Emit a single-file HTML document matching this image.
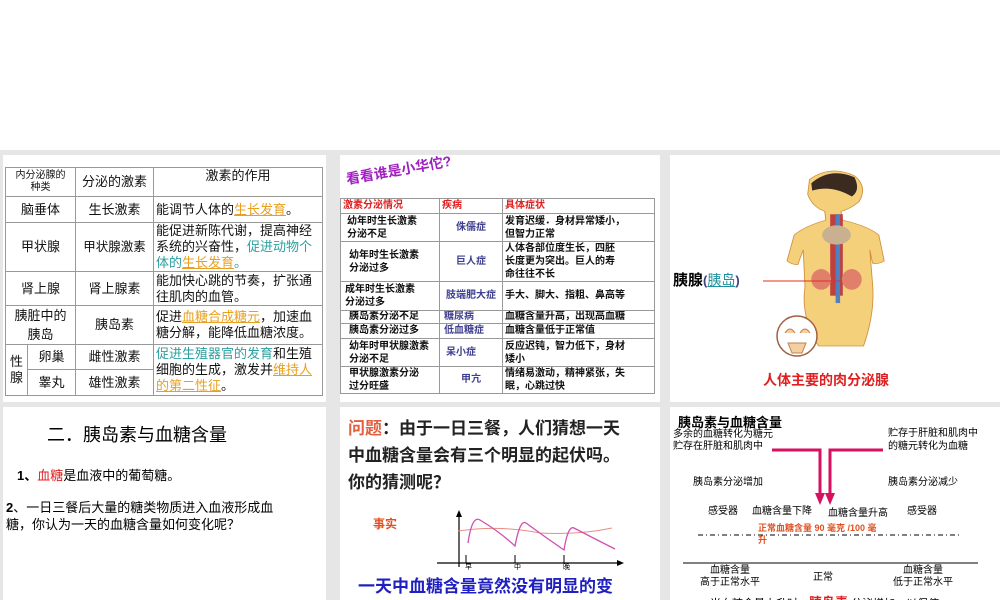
<!DOCTYPE html>
<html><head><meta charset="utf-8"><style>
*{margin:0;padding:0;box-sizing:border-box}
body{width:1000px;height:600px;overflow:hidden;background:#fff;font-family:"Liberation Sans","Noto Sans CJK SC",sans-serif;position:relative}
.bg{position:absolute;left:0;top:150px;width:1000px;height:450px;background:#e6e6e6}
.p{position:absolute;background:#fff;overflow:hidden}
.a{position:absolute;white-space:nowrap}
table{border-collapse:collapse;position:absolute;table-layout:fixed}
td{border:1px solid #999;font-size:13px;color:#111;line-height:16px;padding:0 2px;overflow:hidden}
.o{color:#e8a020;text-decoration:underline}
.t{color:#2aa0a0}
.b td{font-weight:bold}
</style></head><body>
<div class="bg"></div>

<div class="p" style="left:3px;top:155px;width:323px;height:247px">
<table style="left:2px;top:12px;width:318px;height:228px">
<colgroup><col style="width:22px"><col style="width:48px"><col style="width:78px"><col></colgroup>
<tr style="height:29px"><td colspan="2" style="text-align:center;font-size:10px;line-height:12px">内分泌腺的<br>种类</td><td style="text-align:center">分泌的激素</td><td style="text-align:center;vertical-align:top">激素的作用</td></tr>
<tr style="height:26px"><td colspan="2" style="text-align:center">脑垂体</td><td style="text-align:center">生长激素</td><td>能调节人体的<span class="o">生长发育</span>。</td></tr>
<tr style="height:49px"><td colspan="2" style="text-align:center">甲状腺</td><td style="text-align:center;font-size:12.5px">甲状腺激素</td><td>能促进新陈代谢，提高神经系统的兴奋性，<span class="t">促进动物个体的</span><span class="o">生长发育</span><span class="t">。</span></td></tr>
<tr style="height:34px"><td colspan="2" style="text-align:center">肾上腺</td><td style="text-align:center">肾上腺素</td><td>能加快心跳的节奏，扩张通往肌肉的血管。</td></tr>
<tr style="height:38px"><td colspan="2" style="text-align:center;line-height:19px">胰脏中的<br>胰岛</td><td style="text-align:center">胰岛素</td><td>促进<span class="o">血糖合成糖元</span>，加速血糖分解，能降低血糖浓度。</td></tr>
<tr style="height:25px"><td rowspan="2" style="text-align:center">性<br>腺</td><td style="text-align:center">卵巢</td><td style="text-align:center">雌性激素</td><td rowspan="2"><span class="t">促进生殖器官的发育</span>和生殖细胞的生成，激发并<span class="o">维持人的第二性征</span>。</td></tr>
<tr style="height:26px"><td style="text-align:center">睾丸</td><td style="text-align:center">雄性激素</td></tr>
</table></div>

<div class="p" style="left:340px;top:155px;width:320px;height:247px">
<div class="a" style="left:8px;top:14px;font-size:14px;font-weight:bold;color:#a020c0;transform:rotate(-10deg);transform-origin:left bottom">看看谁是小华佗?</div>
<table class="b" style="left:0;top:43px;width:315px;height:195px">
<colgroup><col style="width:99px"><col style="width:63px"><col></colgroup>
<tr style="height:15px"><td style="color:#e02020;font-size:10px;line-height:12px">激素分泌情况</td><td style="color:#e02020;font-size:10px;line-height:12px">疾病</td><td style="color:#e02020;font-size:10px;line-height:12px">具体症状</td></tr>
<tr style="height:28px"><td style="font-size:10px;line-height:13px;padding-left:6px">幼年时生长激素<br>分泌不足</td><td style="color:#404090;font-size:10px;text-align:center">侏儒症</td><td style="font-size:10px;line-height:13px">发育迟缓．身材异常矮小，<br>但智力正常</td></tr>
<tr style="height:40px"><td style="font-size:10px;line-height:13px;padding-left:8px">幼年时生长激素<br>分泌过多</td><td style="color:#404090;font-size:10px;text-align:center">巨人症</td><td style="font-size:10px;line-height:13px">人体各部位度生长，四胚<br>长度更为突出。巨人的寿<br>命往往不长</td></tr>
<tr style="height:29px"><td style="font-size:10px;line-height:13px;padding-left:4px">成年时生长激素<br>分泌过多</td><td style="color:#404090;font-size:10px;text-align:center">肢端肥大症</td><td style="font-size:10px">手大、脚大、指粗、鼻高等</td></tr>
<tr style="height:13px"><td style="font-size:10px;line-height:12px;padding-left:8px">胰岛素分泌不足</td><td style="color:#404090;font-size:10px;line-height:12px;padding-left:4px">糖尿病</td><td style="font-size:10px;line-height:12px">血糖含量升高，出现高血糖</td></tr>
<tr style="height:15px"><td style="font-size:10px;line-height:12px;padding-left:8px">胰岛素分泌过多</td><td style="color:#404090;font-size:10px;line-height:12px;padding-left:4px">低血糖症</td><td style="font-size:10px;line-height:12px">血糖含量低于正常值</td></tr>
<tr style="height:28px"><td style="font-size:10px;line-height:13px;padding-left:8px">幼年时甲状腺激素<br>分泌不足</td><td style="color:#404090;font-size:10px;padding-left:6px">呆小症</td><td style="font-size:10px;line-height:13px">反应迟钝，智力低下，身材<br>矮小</td></tr>
<tr style="height:27px"><td style="font-size:10px;line-height:13px;padding-left:8px">甲状腺激素分泌<br>过分旺盛</td><td style="color:#404090;font-size:10px;text-align:center">甲亢</td><td style="font-size:10px;line-height:13px">情绪易激动，精神紧张，失<br>眠，心跳过快</td></tr>
</table></div>

<div class="p" style="left:670px;top:155px;width:330px;height:247px">
<svg width="330" height="247" style="position:absolute;left:0;top:0">
<g transform="translate(18,6) scale(0.9,0.74)">
<path d="M135 25 Q158 5 185 20 Q200 35 190 55 Q180 65 170 68 L172 80 Q200 88 212 100 L218 135 Q212 140 205 138 L202 120 L205 165 Q208 205 195 250 L145 250 Q125 210 130 170 L128 120 L122 140 Q115 140 110 135 L118 100 Q130 88 153 80 L152 68 Q138 62 133 45 Z" fill="#f4d07a" stroke="#d09040"/>
<path d="M137 30 Q158 8 185 22 Q192 40 182 48 Q160 32 138 40 Z" fill="#3a2a20"/>
<rect x="158" y="72" width="14" height="110" fill="#c04040"/>
<rect x="164" y="72" width="5" height="120" fill="#5080c0"/>
<ellipse cx="165" cy="100" rx="16" ry="13" fill="#c8b090"/>
<ellipse cx="148" cy="160" rx="11" ry="14" fill="#e0806a"/>
<ellipse cx="182" cy="160" rx="11" ry="14" fill="#e0806a"/>
</g>
<circle cx="127" cy="181" r="20" fill="#fff" stroke="#a06040" stroke-width="1.5"/>
<path d="M115 178 q5 -8 10 0 M130 178 q5 -8 10 0 M118 188 h18 l-4 10 h-10z" stroke="#c08050" fill="#f4d0a0"/>
<line x1="93" y1="126" x2="170" y2="126" stroke="#e03020" stroke-width="1"/>
</svg>
<div class="a" style="left:3px;top:114px;font-size:15px;font-weight:bold">胰腺<span style="font-size:13px;color:#404080">(</span><span style="font-size:14px;color:#2090a0;text-decoration:underline;font-weight:normal">胰岛</span><span style="font-size:13px;color:#404080">)</span></div>
<div class="a" style="left:93px;top:215px;font-size:14px;font-weight:bold;color:#e02020">人体主要的肉分泌腺</div>
</div>

<div class="p" style="left:3px;top:407px;width:323px;height:193px">
<div class="a" style="left:44px;top:14px;font-size:18px">二．胰岛素与血糖含量</div>
<div class="a" style="left:14px;top:58px;font-size:13px;font-weight:bold">1、<span style="color:#e02020;font-weight:normal">血糖</span><span style="font-weight:normal">是血液中的葡萄糖。</span></div>
<div class="a" style="left:3px;top:92px;font-size:13px;line-height:17px"><b>2</b>、一日三餐后大量的糖类物质进入血液形成血<br>糖，你认为一天的血糖含量如何变化呢？</div>
</div>

<div class="p" style="left:340px;top:407px;width:320px;height:193px">
<div class="a" style="left:8px;top:8px;font-size:17px;line-height:27px;font-weight:bold;color:#222"><span style="color:#e06040">问题</span>：由于一日三餐，人们猜想一天<br>中血糖含量会有三个明显的起伏吗。<br>你的猜测呢？</div>
<div class="a" style="left:33px;top:108px;font-size:12px;font-weight:bold;color:#e05020">事实</div>
<svg width="320" height="193" style="position:absolute;left:0;top:0">
<path d="M119 108 V160 M97 156 H278" stroke="#000" stroke-width="1.2" fill="none"/>
<path d="M284 156 l-7 -3 v6z M119 103 l-3 7 h6z" fill="#000"/>
<path d="M126 148 v8 M175 148 v8 M224 148 v8" stroke="#000"/>
<path d="M118 124 Q160 118 200 126 Q240 128 272 121" stroke="#e89080" fill="none"/>
<path d="M128 136 Q132 108 140 113 Q160 125 175 139 Q180 112 186 116 Q205 130 224 143 Q228 118 234 121 Q255 132 275 142" stroke="#d050b0" stroke-width="1.3" fill="none"/>
</svg>
<div class="a" style="left:125px;top:155px;font-size:7px">早</div><div class="a" style="left:174px;top:155px;font-size:7px">中</div><div class="a" style="left:223px;top:155px;font-size:7px">晚</div>
<div class="a" style="left:18px;top:165px;font-size:17px;font-weight:bold;color:#2020c0">一天中血糖含量竟然没有明显的变</div>
</div>

<div class="p" style="left:670px;top:407px;width:330px;height:193px">
<div class="a" style="left:8px;top:5px;font-size:13px;font-weight:bold">胰岛素与血糖含量</div>
<div class="a" style="left:3px;top:22px;font-size:10px;line-height:12px">多余的血糖转化为糖元<br>贮存在肝脏和肌肉中</div>
<div class="a" style="left:218px;top:20px;font-size:10px;line-height:13px">贮存于肝脏和肌肉中<br>的糖元转化为血糖</div>
<svg width="330" height="193" style="position:absolute;left:0;top:0">
<path d="M102 43 H150 V88 M160 88 V43 H213" stroke="#d81060" stroke-width="3" fill="none"/>
<path d="M145 86 h10 l-5 12z M155 86 h10 l-5 12z" fill="#d81060"/>
<line x1="28" y1="128" x2="292" y2="128" stroke="#000" stroke-dasharray="5 3 1 3"/>
<line x1="13" y1="156" x2="308" y2="156" stroke="#000"/>
</svg>
<div class="a" style="left:23px;top:66px;font-size:10px">胰岛素分泌增加</div>
<div class="a" style="left:218px;top:66px;font-size:10px">胰岛素分泌减少</div>
<div class="a" style="left:38px;top:95px;font-size:10px">感受器</div>
<div class="a" style="left:82px;top:95px;font-size:10px">血糖含量下降</div>
<div class="a" style="left:158px;top:97px;font-size:10px">血糖含量升高</div>
<div class="a" style="left:237px;top:95px;font-size:10px">感受器</div>
<div class="a" style="left:88px;top:115px;font-size:9px;line-height:12px;color:#e05020;font-weight:bold">正常血糖含量 90 毫克 /100 毫<br>升</div>
<div class="a" style="left:30px;top:158px;font-size:10px;line-height:12px;text-align:center">血糖含量<br>高于正常水平</div>
<div class="a" style="left:143px;top:161px;font-size:10px">正常</div>
<div class="a" style="left:223px;top:158px;font-size:10px;line-height:12px;text-align:center">血糖含量<br>低于正常水平</div>
<div class="a" style="left:40px;top:185px;font-size:11px">当血糖含量上升时，<span style="color:#e02020;font-weight:bold;font-size:13px">胰岛素</span> 分泌增加，以保使</div>
</div>
</body></html>
